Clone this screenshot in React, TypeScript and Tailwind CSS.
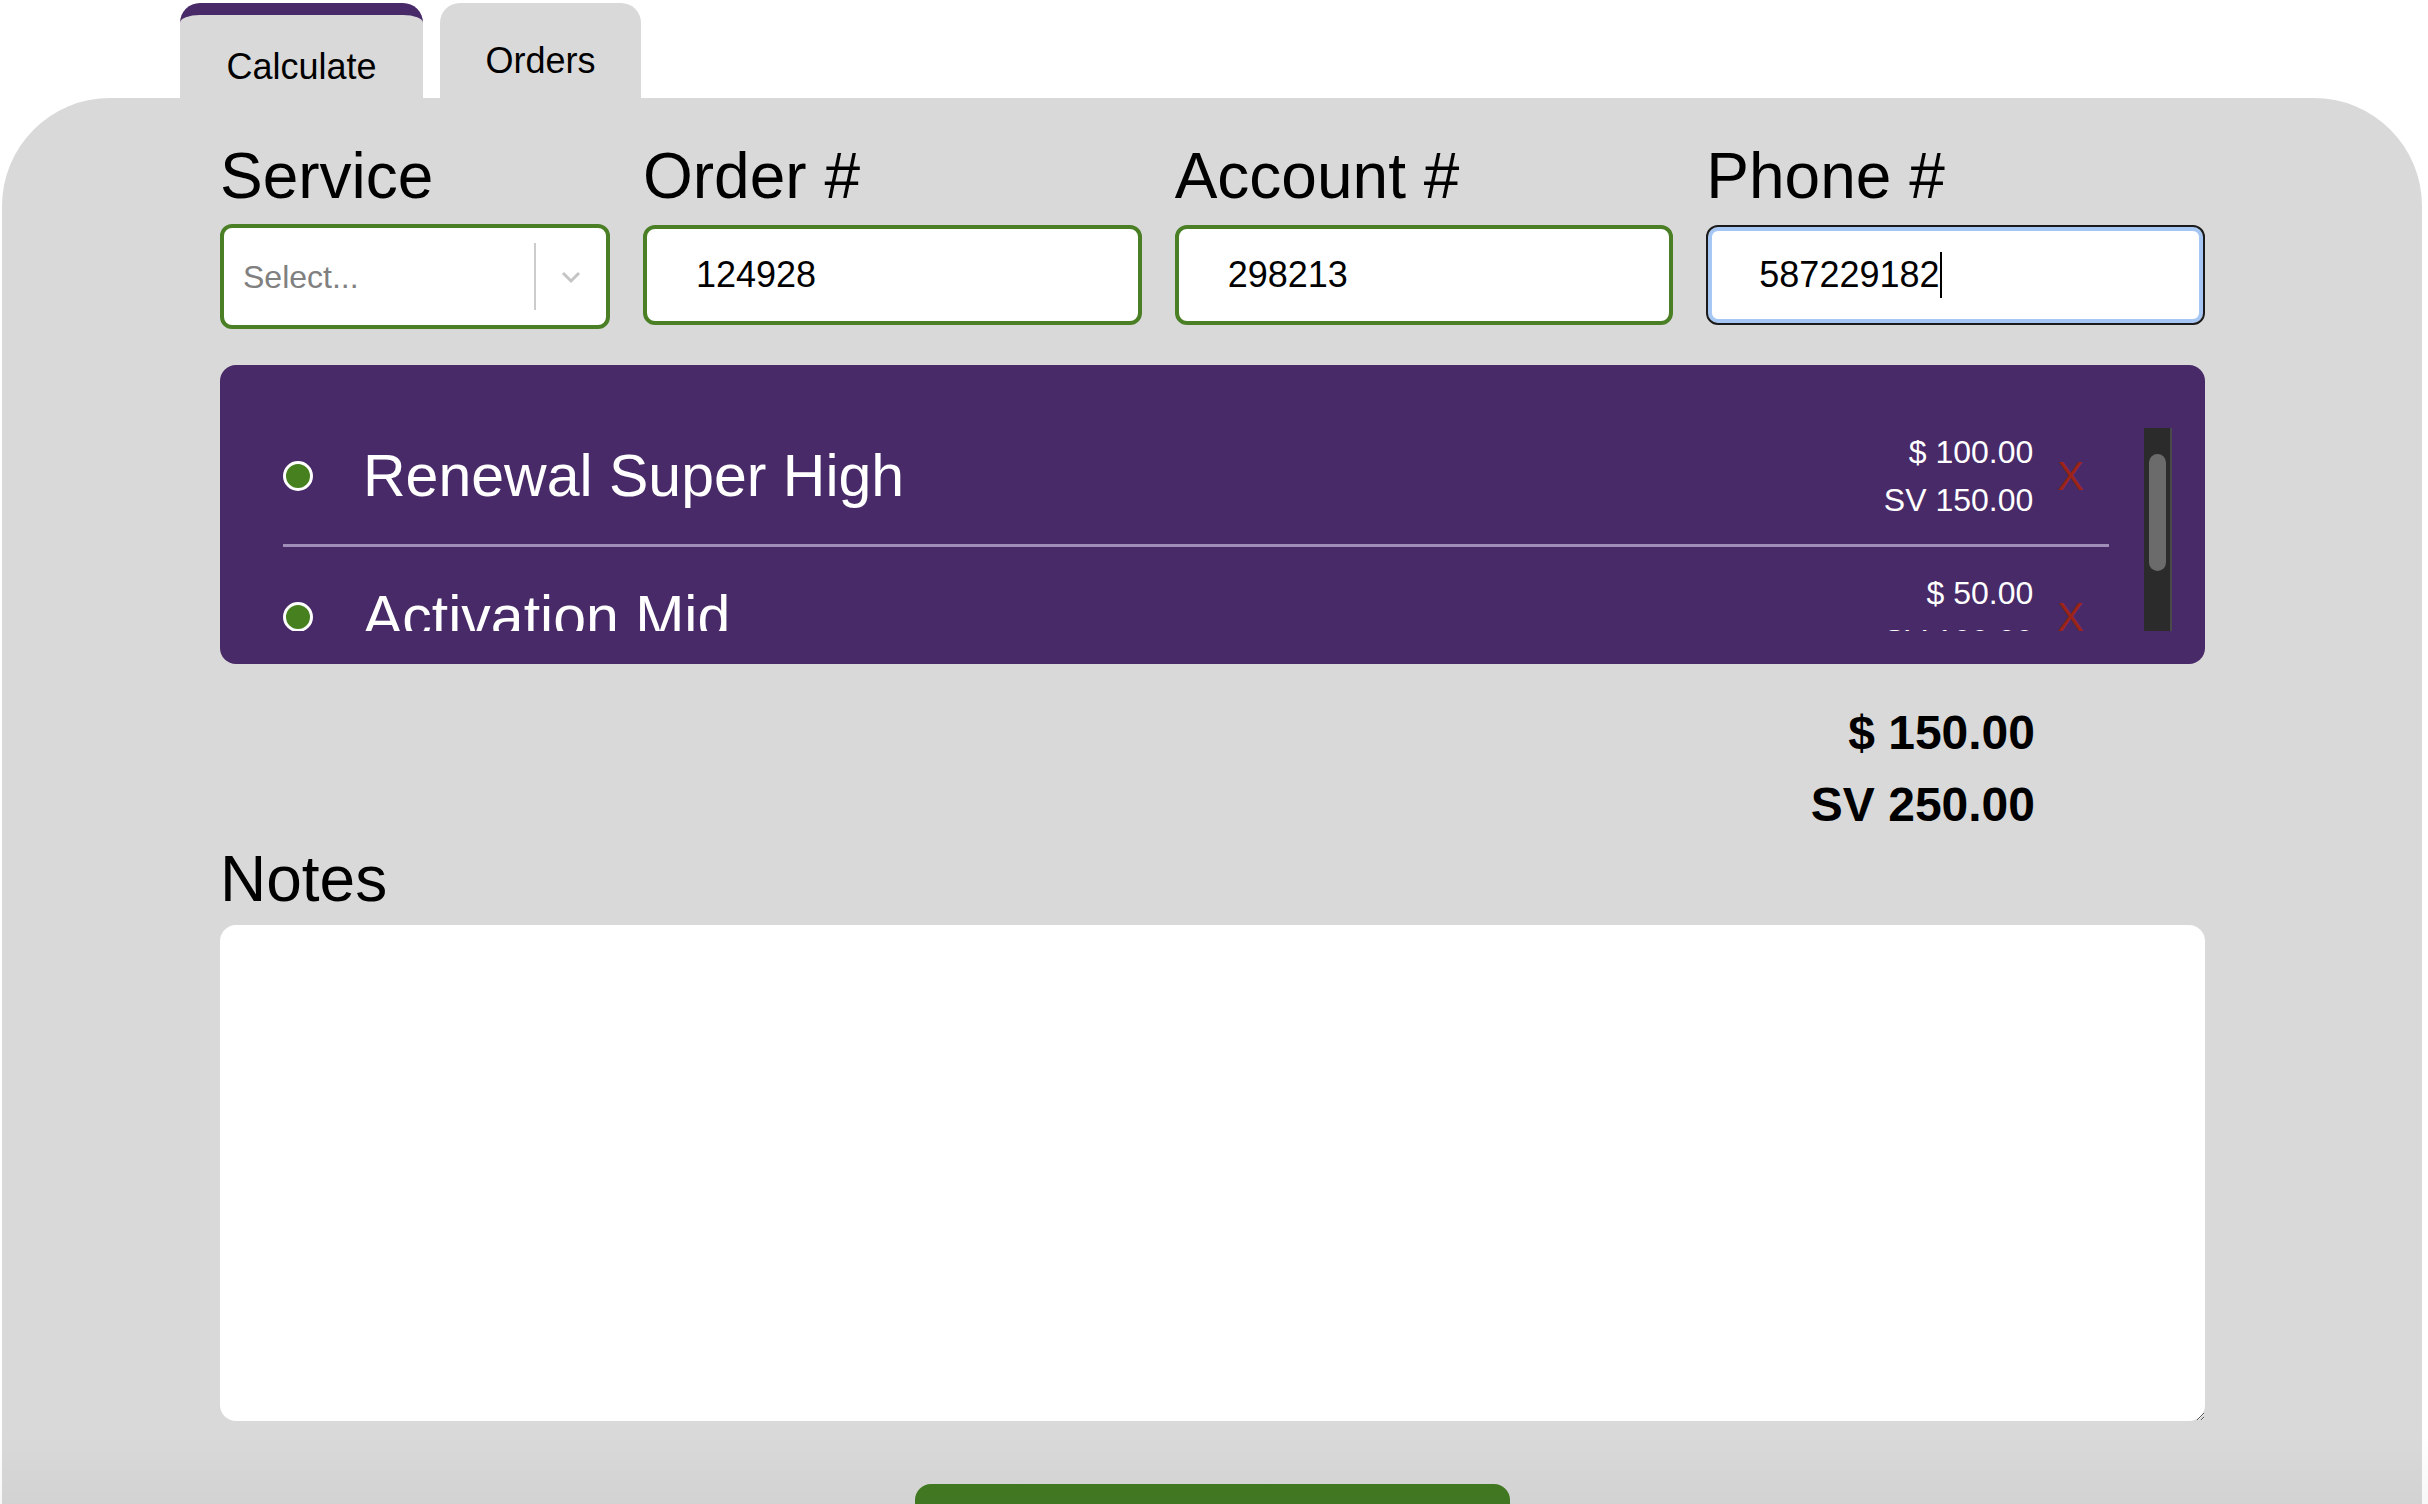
import React from "react";

const font = "font-['Liberation_Sans','Helvetica_Neue',Arial,sans-serif]";

function Chevron() {
  return (
    <svg width="30" height="30" viewBox="0 0 30 30" fill="none">
      <polyline points="7,11 15,19 23,11" stroke="#c4c4c4" strokeWidth="3" fill="none" />
    </svg>
  );
}

function Row({ name, price, sv, first }: { name: string; price: string; sv: string; first?: boolean }) {
  return (
    <div className={`flex items-center pr-[25px] ${first ? "pb-[20px] border-b-[3px] border-[#a08db8]" : "pt-[22px] pb-[20px]"}`}>
      <div className="w-[30px] h-[30px] rounded-full bg-[#46801f] border-[3px] border-white shrink-0" />
      <div className="ml-[50px] flex-1 text-white text-[59px] leading-[96px] whitespace-nowrap">{name}</div>
      <div className="flex flex-col items-end text-white text-[32px] leading-[48px]">
        <span>{price}</span>
        <span>{sv}</span>
      </div>
      <div className="ml-[24px] text-[#9c2417] text-[40px] leading-none">X</div>
    </div>
  );
}

export default function App() {
  return (
    <div className={`relative h-[1504px] w-full overflow-hidden bg-white ${font} text-black`}>
      {/* Tabs */}
      <div className="flex pl-[180px] pt-[3px] gap-[17px] h-[98px]">
        <div className="w-[243px] h-[95px] bg-[#d9d9d9] border-t-[12px] border-[#482a68] rounded-t-[20px] flex justify-center pt-[31px]">
          <span className="text-[36px] leading-[41px]">Calculate</span>
        </div>
        <div className="w-[201px] h-[95px] bg-[#d9d9d9] rounded-t-[20px] flex justify-center pt-[37px]">
          <span className="text-[36px] leading-[41px]">Orders</span>
        </div>
      </div>

      {/* Panel */}
      <div className="ml-[2px] w-[2420px] h-[1420px] bg-[#d9d9d9] rounded-t-[108px] pl-[218px] pr-[217px] pt-[42px]">
        <div className="grid grid-cols-[390px_1fr_1fr_1fr] gap-x-[33px]">
          <div className="text-[64px] leading-[72px]">Service</div>
          <div className="text-[64px] leading-[72px]">Order #</div>
          <div className="text-[64px] leading-[72px]">Account #</div>
          <div className="text-[64px] leading-[72px]">Phone #</div>

          <div className="mt-[12px] h-[105px] bg-white border-[4px] border-[#4a7f25] rounded-[12px] flex items-center">
            <span className="flex-1 pl-[19px] text-[32px] text-[#808080]">Select...</span>
            <div className="w-[2px] h-[67px] bg-[#cccccc]" />
            <div className="w-[70px] flex justify-center">
              <Chevron />
            </div>
          </div>
          <input
            readOnly
            value="124928"
            className="mt-[13px] h-[100px] w-full bg-white border-[4px] border-[#4a7f25] rounded-[12px] pl-[49px] text-[36px] outline-none"
          />
          <input
            readOnly
            value="298213"
            className="mt-[13px] h-[100px] w-full bg-white border-[4px] border-[#4a7f25] rounded-[12px] pl-[49px] text-[36px] outline-none"
          />
          <div className="mt-[13px] h-[100px] bg-white border-[2px] border-[#1a1a1a] rounded-[12px] shadow-[inset_0_0_0_4px_#a6c7f4] pl-[51px] flex items-center">
            <span className="text-[36px]">587229182</span>
            <span className="w-[2px] h-[46px] bg-black" />
          </div>
        </div>

        {/* Items box */}
        <div className="mt-[36px] h-[299px] bg-[#482a68] rounded-[16px] pt-[63px] pl-[63px] pr-[33px] pb-[33px]">
          <div className="flex h-[203px]">
            <div className="flex-1 mr-[35px] overflow-hidden">
              <Row first name="Renewal Super High" price="$ 100.00" sv="SV 150.00" />
              <Row name="Activation Mid" price="$ 50.00" sv="SV 100.00" />
            </div>
            <div className="w-[28px] h-full bg-[#2b2b2b] border-r-[2px] border-[#4a4a4a] pl-[5px] pt-[26px]">
              <div className="w-[17px] h-[117px] rounded-full bg-[#6b6b6b]" />
            </div>
          </div>
        </div>

        {/* Totals */}
        <div className="mt-[33px] pr-[170px] flex flex-col items-end font-bold text-[48px] leading-[72px]">
          <span>$ 150.00</span>
          <span>SV 250.00</span>
        </div>

        {/* Notes */}
        <div className="mt-[2px] text-[64px] leading-[72px]">Notes</div>
        <textarea className="mt-[10px] block w-full h-[496px] bg-white rounded-[16px] outline-none p-[16px] text-[32px]" />

        <div className="mt-[63px] mx-auto w-[595px] h-[100px] bg-[#427a22] rounded-t-[16px]" />
      </div>

      <div className="pointer-events-none absolute left-0 right-0 bottom-0 h-[70px] bg-gradient-to-b from-transparent to-[#00000008]" />
    </div>
  );
}
